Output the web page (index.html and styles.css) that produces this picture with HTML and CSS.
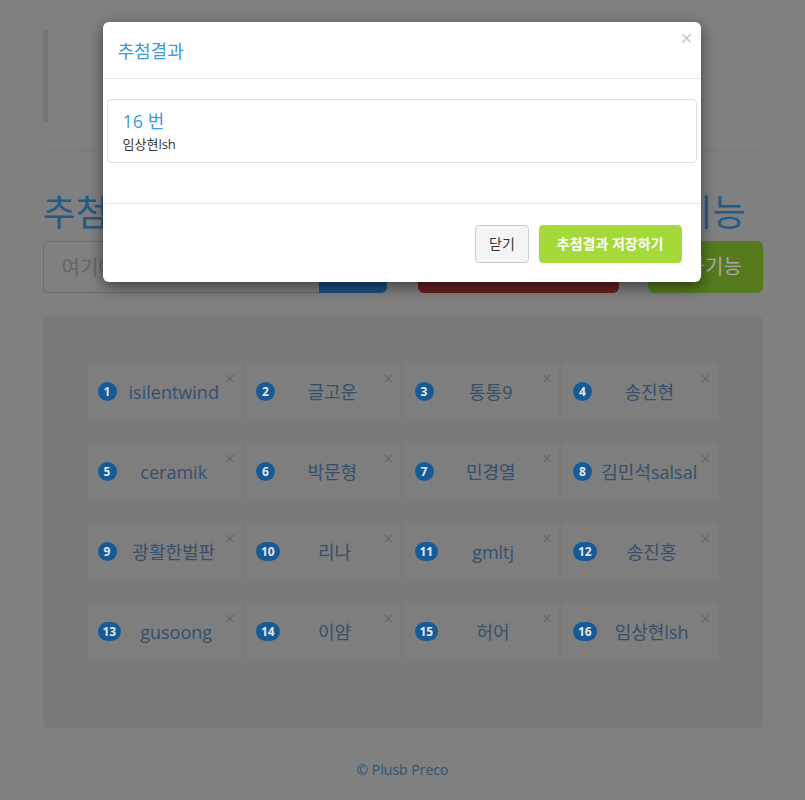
FILE: index.html
```html
<!DOCTYPE html>
<html lang="ko">
<head>
<meta charset="utf-8">
<title>추첨</title>
<link rel="stylesheet" href="styles.css">
</head>
<body>
<div class="container">
  <blockquote class="intro"></blockquote>
  <hr class="divider">
  <h1 class="title">추첨 프로그램 - 이름 입력 및 자동 추첨 기능</h1>
  <div class="controls">
    <div class="input-group">
      <input class="name-input" type="text" placeholder="여기에 이름을 입력하세요">
      <button class="btn-add">입력</button>
    </div>
    <button class="btn-draw">추첨하기</button>
    <button class="btn-extra">추가기능</button>
  </div>
  <div class="well">
    <div class="grid">
      <div class="tile"><span class="badge">1</span><span class="name">isilentwind</span><span class="x">×</span></div>
      <div class="tile"><span class="badge">2</span><span class="name">글고운</span><span class="x">×</span></div>
      <div class="tile"><span class="badge">3</span><span class="name">통통9</span><span class="x">×</span></div>
      <div class="tile"><span class="badge">4</span><span class="name">송진현</span><span class="x">×</span></div>
      <div class="tile"><span class="badge">5</span><span class="name">ceramik</span><span class="x">×</span></div>
      <div class="tile"><span class="badge">6</span><span class="name">박문형</span><span class="x">×</span></div>
      <div class="tile"><span class="badge">7</span><span class="name">민경열</span><span class="x">×</span></div>
      <div class="tile"><span class="badge">8</span><span class="name">김민석salsal</span><span class="x">×</span></div>
      <div class="tile"><span class="badge">9</span><span class="name">광활한벌판</span><span class="x">×</span></div>
      <div class="tile"><span class="badge">10</span><span class="name">리나</span><span class="x">×</span></div>
      <div class="tile"><span class="badge">11</span><span class="name">gmltj</span><span class="x">×</span></div>
      <div class="tile"><span class="badge">12</span><span class="name">송진홍</span><span class="x">×</span></div>
      <div class="tile"><span class="badge">13</span><span class="name">gusoong</span><span class="x">×</span></div>
      <div class="tile"><span class="badge">14</span><span class="name">이얌</span><span class="x">×</span></div>
      <div class="tile"><span class="badge">15</span><span class="name">허어</span><span class="x">×</span></div>
      <div class="tile"><span class="badge">16</span><span class="name">임상현lsh</span><span class="x">×</span></div>
    </div>
  </div>
  <footer class="footer">© Plusb Preco</footer>
</div>

<div class="modal">
  <div class="modal-header">
    <h4 class="modal-title">추첨결과</h4>
    <span class="modal-close">×</span>
  </div>
  <div class="modal-body">
    <div class="result">
      <div class="result-num">16 번</div>
      <div class="result-name">임상현lsh</div>
    </div>
  </div>
  <div class="modal-footer">
    <button class="btn btn-default">닫기</button>
    <button class="btn btn-save">추첨결과 저장하기</button>
  </div>
</div>
</body>
</html>
```
FILE: styles.css
```css
* { box-sizing: border-box; }
body {
  margin: 0;
  background: #808080;
  font-family: "Open Sans", "Noto Sans CJK KR", sans-serif;
  color: #333;
}
.container {
  width: 720px;
  margin: 0 auto;
  padding-top: 30px;
}
.intro {
  margin: 0;
  height: 92px;
  border-left: 5px solid #767676;
}
.divider {
  margin: 28px 0 0;
  border: 0;
  border-top: 1px solid #7a7a7a;
}
.title {
  width: 703px;
  margin: 44px 0 10px;
  font-size: 36px;
  line-height: 36px;
  font-weight: normal;
  color: #255a88;
  text-align: justify;
  text-align-last: justify;
  white-space: nowrap;
}
.controls {
  display: flex;
  height: 52px;
}
.input-group {
  display: flex;
  width: 344px;
}
.name-input {
  flex: 1;
  min-width: 0;
  height: 52px;
  border: 1px solid #6c6c6c;
  border-right: 0;
  border-radius: 6px 0 0 6px;
  background: #808080;
  padding: 0 18px;
  font: 20px "Open Sans", "Noto Sans CJK KR", sans-serif;
  outline: none;
}
.name-input::placeholder { color: #666; }
.btn-add, .btn-draw, .btn-extra {
  border: 0;
  height: 52px;
  font: 20px/20px "Open Sans", "Noto Sans CJK KR", sans-serif;
  color: #a9a9a9;
  padding: 0;
}
.btn-add {
  width: 68px;
  background: #1b4f82;
  border-radius: 0 6px 6px 0;
}
.btn-draw {
  width: 201px;
  margin-left: 31px;
  background: #6a2020;
  border-radius: 6px;
}
.btn-extra {
  width: 115px;
  margin-left: 29px;
  background: #567b1e;
  border-radius: 6px;
}
.well {
  margin-top: 22px;
  background: #7a7a7a;
  border-radius: 6px;
  padding: 48px 45px 68px 44px;
}
.grid {
  display: grid;
  grid-template-columns: repeat(4, 1fr);
  column-gap: 3px;
  row-gap: 23px;
}
.tile {
  position: relative;
  height: 57px;
  display: flex;
  align-items: center;
  padding: 0 10px;
  background: #7e7e7e;
  border: 1px solid #7b7b7b;
}
.badge {
  display: inline-block;
  min-width: 19px;
  height: 19px;
  padding: 0 5px;
  border-radius: 10px;
  background: #175a96;
  color: #e6e6e6;
  font-size: 12px;
  font-weight: bold;
  line-height: 19px;
  text-align: center;
  font-family: "Open Sans", sans-serif;
}
.name {
  flex: 1;
  text-align: center;
  font-size: 18px;
  line-height: 24px;
  color: #34506b;
  white-space: nowrap;
}
.x {
  position: absolute;
  top: 4px;
  right: 6px;
  font-size: 18px;
  line-height: 20px;
  color: #676767;
}
.footer {
  margin-top: 32px;
  text-align: center;
  font-size: 14px;
  line-height: 20px;
  color: #2f5372;
}

/* modal */
.modal {
  position: absolute;
  top: 22px;
  left: 50%;
  margin-left: -300px;
  width: 598px;
  background: #fff;
  border-radius: 6px;
  box-shadow: 0 5px 15px rgba(0, 0, 0, 0.5);
}
.modal-header {
  position: relative;
  padding: 16px 15px 14px;
  border-bottom: 1px solid #e5e5e5;
}
.modal-title {
  margin: 0;
  font-size: 18px;
  line-height: 26px;
  font-weight: normal;
  color: #3d9bd9;
}
.modal-close {
  position: absolute;
  top: 6px;
  right: 8px;
  font-size: 21px;
  line-height: 21px;
  color: #c9c9c9;
}
.modal-body {
  padding: 20px 4px 20px;
}
.result {
  margin-bottom: 20px;
  border: 1px solid #ddd;
  border-radius: 4px;
  padding: 9px 15px 8px;
}
.result-num {
  font-size: 18px;
  line-height: 24px;
  color: #3d9bd9;
}
.result-name {
  margin-top: 2px;
  font-size: 13px;
  line-height: 19px;
  color: #333;
}
.modal-footer {
  display: flex;
  justify-content: flex-end;
  gap: 10px;
  padding: 21px 19px 19px;
  border-top: 1px solid #e5e5e5;
}
.btn {
  font: 14px/20px "Open Sans", "Noto Sans CJK KR", sans-serif;
  padding: 8px 13px;
  border-radius: 4px;
}
.btn-default {
  background: #f5f5f5;
  border: 1px solid #ccc;
  color: #333;
}
.btn-save {
  padding: 8px 17px;
  background: #a5d93a;
  border: 1px solid #a5d93a;
  color: #fff;
  font-weight: bold;
}
```
